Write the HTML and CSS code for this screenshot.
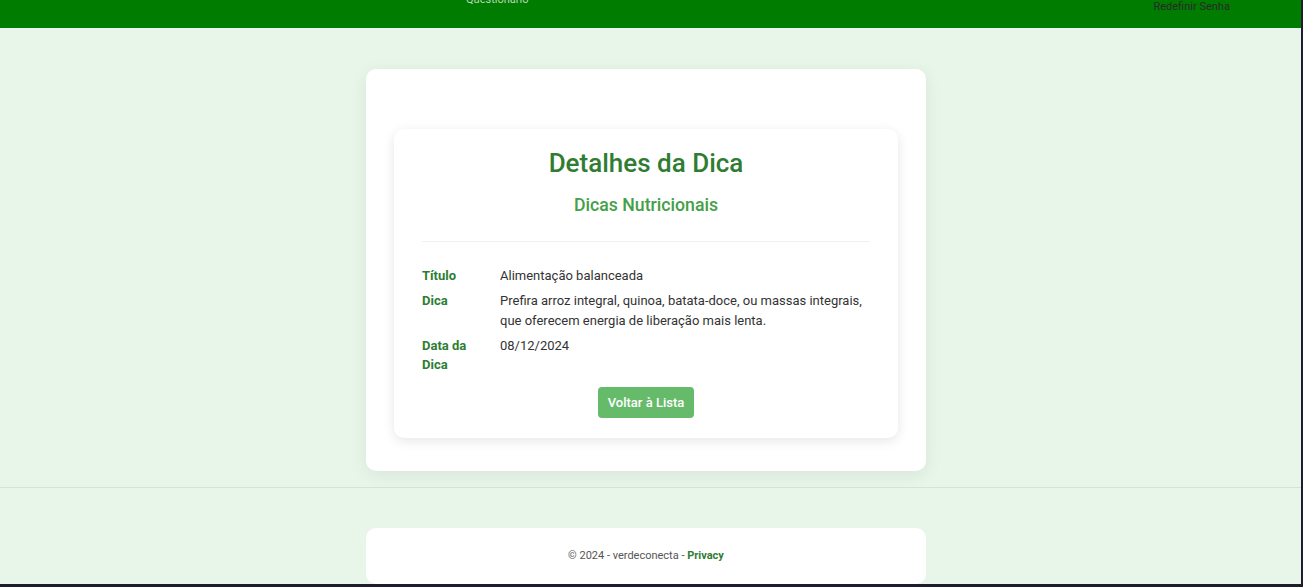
FILE: index.html
```html
<!DOCTYPE html>
<html lang="pt-BR">
<head>
<meta charset="utf-8">
<title>Detalhes da Dica - verdeconecta</title>
<link rel="stylesheet" href="styles.css">
</head>
<body>
<header class="topbar">
  <nav class="nav">
    <a class="nav-link nav-light" href="#">Questionário</a>
    <a class="nav-link nav-dark" href="#">Redefinir Senha</a>
  </nav>
</header>
<main class="main">
  <section class="outer-card">
    <div class="detail-card">
      <h1 class="title">Detalhes da Dica</h1>
      <h2 class="subtitle">Dicas Nutricionais</h2>
      <hr class="divider">
      <dl class="details">
        <dt>Título</dt>
        <dd>Alimentação balanceada</dd>
        <dt>Dica</dt>
        <dd>Prefira arroz integral, quinoa, batata-doce, ou massas integrais, que oferecem energia de liberação mais lenta.</dd>
        <dt>Data da Dica</dt>
        <dd>08/12/2024</dd>
      </dl>
      <div class="actions">
        <a class="btn" href="#">Voltar à Lista</a>
      </div>
    </div>
  </section>
</main>
<footer class="footer">
  <div class="footer-card">© 2024 - verdeconecta - <a href="#" class="footer-link">Privacy</a></div>
</footer>
</body>
</html>
```

FILE: styles.css
```css
html {
  background: #1f1c2e;
  height: 100%;
}
body {
  margin: 0 2px 0 0;
  background: #e8f5e9;
  font-family: Roboto, "Liberation Sans", Arial, sans-serif;
  color: #333;
}
a { text-decoration: none; }

.topbar {
  height: 28px;
  background: #007c00;
  overflow: hidden;
}
.nav {
  display: flex;
  align-items: flex-start;
  padding-left: 466px;
}
.nav-link {
  font-size: 11px;
  line-height: 13px;
}
.nav-light {
  color: #b9d9b9;
  margin-top: -7px;
}
.nav-dark {
  color: #2a2a2a;
  margin-left: 625px;
  margin-top: 0;
}

.main {
  display: flex;
  justify-content: center;
  padding: 41px 9px 16px 0;
  border-bottom: 1px solid #d5e3d6;
}
.outer-card {
  width: 504px;
  padding: 60px 28px 33px;
  background: #fff;
  border-radius: 10px;
  box-shadow: 0 4px 18px rgba(0, 0, 0, 0.07);
}
.detail-card {
  padding: 19px 28px 20px;
  background: #fff;
  border-radius: 10px;
  box-shadow: 0 3px 12px rgba(0, 0, 0, 0.1);
}
.title {
  margin: 0;
  text-align: center;
  font-size: 26px;
  line-height: 31px;
  font-weight: 500;
  color: #2e7d32;
}
.subtitle {
  margin: 15px 0 0;
  text-align: center;
  font-size: 17.7px;
  line-height: 22px;
  font-weight: 500;
  color: #43a047;
}
.divider {
  margin: 25px 0 0;
  border: 0;
  border-top: 1px solid #f0f0f0;
}
.details {
  display: grid;
  grid-template-columns: 70px 1fr;
  column-gap: 8px;
  row-gap: 5.5px;
  margin: 24px 0 0;
  font-size: 13px;
  line-height: 19.5px;
}
.details dt {
  font-weight: 700;
  color: #2e7d32;
}
.details dd {
  margin: 0;
  color: #333;
}
.actions {
  display: flex;
  justify-content: center;
  margin-top: 12px;
}
.btn {
  display: inline-block;
  padding: 0 10px;
  height: 31px;
  line-height: 31px;
  background: #66bb6a;
  color: #fff;
  font-size: 13px;
  font-weight: 500;
  border-radius: 4px;
}

.footer {
  display: flex;
  justify-content: center;
  padding: 40px 9px 0 0;
}
.footer-card {
  box-sizing: border-box;
  width: 560px;
  height: 56px;
  padding-top: 1px;
  line-height: 54px;
  background: #fff;
  border-radius: 10px;
  text-align: center;
  font-size: 11px;
  color: #555;
}
.footer-link {
  color: #2e7d32;
  font-weight: 700;
}
```
